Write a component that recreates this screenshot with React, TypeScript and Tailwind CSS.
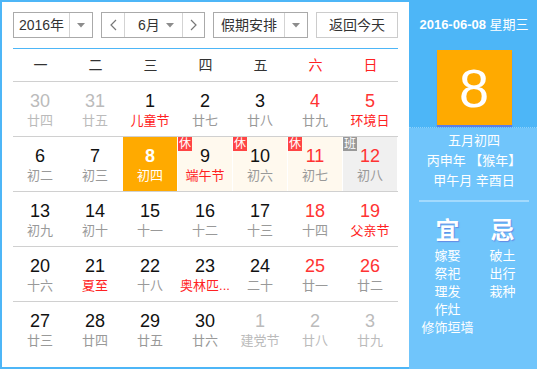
import React from 'react';

type Cell = {
  d: number;
  l: string;
  other?: boolean;
  redNum?: boolean;
  redLunar?: boolean;
  selected?: boolean;
  bg?: 'rest' | 'work';
  badge?: '休' | '班';
};

const rows: Cell[][] = [
  [
    { d: 30, l: '廿四', other: true },
    { d: 31, l: '廿五', other: true },
    { d: 1, l: '儿童节', redLunar: true },
    { d: 2, l: '廿七' },
    { d: 3, l: '廿八' },
    { d: 4, l: '廿九', redNum: true },
    { d: 5, l: '环境日', redNum: true, redLunar: true },
  ],
  [
    { d: 6, l: '初二' },
    { d: 7, l: '初三' },
    { d: 8, l: '初四', selected: true },
    { d: 9, l: '端午节', redLunar: true, bg: 'rest', badge: '休' },
    { d: 10, l: '初六', bg: 'rest', badge: '休' },
    { d: 11, l: '初七', redNum: true, bg: 'rest', badge: '休' },
    { d: 12, l: '初八', redNum: true, bg: 'work', badge: '班' },
  ],
  [
    { d: 13, l: '初九' },
    { d: 14, l: '初十' },
    { d: 15, l: '十一' },
    { d: 16, l: '十二' },
    { d: 17, l: '十三' },
    { d: 18, l: '十四', redNum: true },
    { d: 19, l: '父亲节', redNum: true, redLunar: true },
  ],
  [
    { d: 20, l: '十六' },
    { d: 21, l: '夏至', redLunar: true },
    { d: 22, l: '十八' },
    { d: 23, l: '奥林匹...', redLunar: true },
    { d: 24, l: '二十' },
    { d: 25, l: '廿一', redNum: true },
    { d: 26, l: '廿二', redNum: true },
  ],
  [
    { d: 27, l: '廿三' },
    { d: 28, l: '廿四' },
    { d: 29, l: '廿五' },
    { d: 30, l: '廿六' },
    { d: 1, l: '建党节', other: true },
    { d: 2, l: '廿八', other: true },
    { d: 3, l: '廿九', other: true },
  ],
];

const weekdays = ['一', '二', '三', '四', '五', '六', '日'];

const Caret = () => (
  <svg width="8" height="5" viewBox="0 0 8 5">
    <path d="M0 0 L8 0 L4 4.5 Z" fill="#8c8c8c" />
  </svg>
);

const Chevron = ({ dir }: { dir: 'l' | 'r' }) => (
  <svg width="7" height="12" viewBox="0 0 7 12">
    <path
      d={dir === 'l' ? 'M6 1 L1 6 L6 11' : 'M1 1 L6 6 L1 11'}
      fill="none"
      stroke="#777"
      strokeWidth="1.2"
    />
  </svg>
);

const DayCell = ({ c }: { c: Cell }) => {
  let bg = 'bg-white';
  if (c.selected) bg = 'bg-[#ffaa00]';
  else if (c.bg === 'rest') bg = 'bg-[#fff9ee]';
  else if (c.bg === 'work') bg = 'bg-[#f0f0f0]';

  let num = 'text-[#111]';
  let lunar = 'text-[#999]';
  if (c.other) {
    num = 'text-[#bbb]';
    lunar = 'text-[#bbb]';
  } else if (c.selected) {
    num = 'text-white';
    lunar = 'text-white';
  } else {
    if (c.redNum) num = 'text-[#f33]';
    if (c.redLunar) lunar = 'text-[#f22]';
  }

  return (
    <div className={`relative h-[54px] border-r border-white flex flex-col items-center pt-[9px] ${bg}`}>
      {c.badge && (
        <span
          className={`absolute left-0 top-0 w-[14px] h-[14px] flex items-center justify-center text-[12px] leading-none text-white ${
            c.badge === '休' ? 'bg-[#f44]' : 'bg-[#999]'
          }`}
        >
          {c.badge}
        </span>
      )}
      <span className={`text-[18px] leading-[20px] ${c.selected ? 'font-bold' : ''} ${num}`}>{c.d}</span>
      <span className={`mt-px text-[13px] leading-[18px] whitespace-nowrap ${lunar}`}>{c.l}</span>
    </div>
  );
};

export default function App() {
  return (
    <div
      className="flex w-[537px] h-[369px] bg-white text-[#333]"
      style={{ fontFamily: '"Liberation Sans", "Noto Sans CJK SC", sans-serif' }}
    >
      {/* Calendar */}
      <div className="w-[409px] h-full border-l-2 border-t-2 border-b-2 border-[#4db6f7] px-[11px] pt-[10px]">
        {/* Toolbar */}
        <div className="flex items-center h-[26px] gap-2 text-[14px]">
          <div className="flex h-full w-[80px] border border-[#aaa]">
            <div className="w-[55px] flex items-center justify-center">2016年</div>
            <div className="flex-1 border-l border-[#d3d3d3] flex items-center justify-center">
              <Caret />
            </div>
          </div>
          <div className="flex h-full w-[104px] border border-[#aaa]">
            <div className="w-[22px] flex items-center justify-center">
              <Chevron dir="l" />
            </div>
            <div className="flex-1 border-x border-[#d3d3d3] flex items-center pl-[9px] pr-[8px]">
              <span className="flex-1 pl-[4px]">6月</span>
              <Caret />
            </div>
            <div className="w-[21px] flex items-center justify-center">
              <Chevron dir="r" />
            </div>
          </div>
          <div className="flex h-full w-[95px] border border-[#aaa]">
            <div className="w-[70px] flex items-center justify-center">假期安排</div>
            <div className="flex-1 border-l border-[#d3d3d3] flex items-center justify-center">
              <Caret />
            </div>
          </div>
          <button className="ml-auto h-full w-[82px] border border-[#ccc] flex items-center justify-center">
            返回今天
          </button>
        </div>

        {/* Weekdays */}
        <div className="mt-[10px] border-t border-[#4db6f7] grid grid-cols-7 h-[34px] border-b border-b-[#d0d0d0] text-[14px]">
          {weekdays.map((w, i) => (
            <div key={w} className={`flex items-center justify-center ${i >= 5 ? 'text-[#f22]' : ''}`}>
              {w}
            </div>
          ))}
        </div>

        {/* Days */}
        {rows.map((r, i) => (
          <div key={i} className={`grid grid-cols-7 ${i < rows.length - 1 ? 'border-b border-[#d0d0d0]' : ''}`}>
            {r.map((c, j) => (
              <DayCell key={j} c={c} />
            ))}
          </div>
        ))}
      </div>

      {/* Side panel */}
      <div className="w-[128px] h-full flex flex-col bg-[#70c5fb] text-white">
        <div className="h-[128px] bg-[#4db6f7] flex flex-col items-center pt-[15px] border-b border-dotted border-[#8fd1fb]">
          <div className="text-[13px] leading-[20px] whitespace-nowrap pl-[2px]">
            <span className="font-bold">2016-06-08</span> 星期三
          </div>
          <div className="mt-[15px] ml-[2px] w-[75px] h-[75px] bg-[#ffaa00] shadow-[0_2px_1px_rgba(100,90,220,0.6)] flex items-center justify-center text-[54px] leading-none">
            8
          </div>
        </div>
        <div className="flex flex-col items-center pt-[3px] text-[13px] leading-[20px] pl-[2px]">
          <div>五月初四</div>
          <div className="whitespace-nowrap">丙申年 【猴年】</div>
          <div className="whitespace-nowrap">甲午月 辛酉日</div>
        </div>
        <div className="mt-[9px] ml-[10px] w-[110px] h-[2px] bg-[#a3dafd]" />
        <div className="flex pl-[11px] mt-[16px]">
          <div className="w-[55px] flex flex-col items-center">
            <div className="text-[24px] leading-[26px] font-bold [text-shadow:1px_1px_1px_rgba(90,90,210,0.55)]">宜</div>
            <div className="mt-[3px] flex flex-col items-center text-[13px] leading-[18px] whitespace-nowrap">
              <span>嫁娶</span>
              <span>祭祀</span>
              <span>理发</span>
              <span>作灶</span>
              <span>修饰垣墙</span>
            </div>
          </div>
          <div className="w-[55px] flex flex-col items-center">
            <div className="text-[24px] leading-[26px] font-bold [text-shadow:1px_1px_1px_rgba(90,90,210,0.55)]">忌</div>
            <div className="mt-[3px] flex flex-col items-center text-[13px] leading-[18px] whitespace-nowrap">
              <span>破土</span>
              <span>出行</span>
              <span>栽种</span>
            </div>
          </div>
        </div>
      </div>
    </div>
  );
}
